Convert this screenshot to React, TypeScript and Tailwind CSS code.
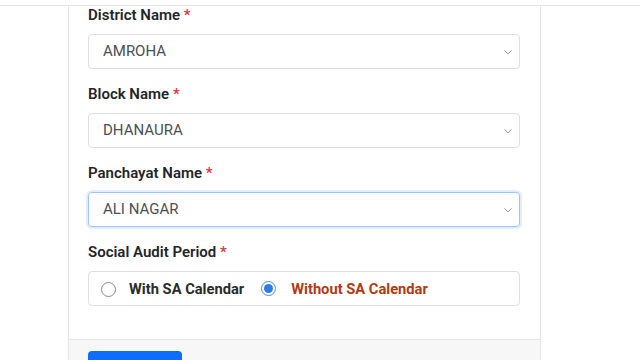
import React from "react";

const Chevron = () => (
  <svg width="10" height="10" viewBox="0 0 16 16" className="absolute right-[6px] top-1/2 -translate-y-1/2">
    <path d="M3 6l5 5 5-5" fill="none" stroke="#8a8a8a" strokeWidth="1.6" strokeLinecap="round" strokeLinejoin="round" />
  </svg>
);

function Field({ label, value, focused }: { label: string; value: string; focused?: boolean }) {
  return (
    <div className="mb-[14px]">
      <div className="text-[15px] leading-[22px] font-semibold text-[#212529] mb-2">
        {label} <span className="text-[#dc3545]">*</span>
      </div>
      <div
        className={
          focused
            ? "relative h-[35px] w-[432px] rounded-[4px] border border-[#9ec5fe] shadow-[0_0_0_2px_rgba(13,110,253,0.12)] bg-white flex items-center pl-[14px] text-[15px] text-[#4a4f55]"
            : "relative h-[35px] w-[432px] rounded-[4px] border border-[#dedede] bg-white flex items-center pl-[14px] text-[15px] text-[#4a4f55]"
        }
      >
        {value}
        <Chevron />
      </div>
    </div>
  );
}

export default function App() {
  return (
    <div className="relative w-[640px] h-[360px] overflow-hidden bg-white" style={{ fontFamily: "Roboto, 'Noto Sans', sans-serif" }}>
      <div className="absolute top-0 left-0 right-0 h-[6px] bg-white border-b border-[#e6e6e6] z-10" />
      <div className="ml-[68px] w-[473px] border-x border-[#e5e5e5] bg-white">
        <div className="pl-[19px] pt-[4px] pb-[33px]">
          <Field label="District Name" value="AMROHA" />
          <Field label="Block Name" value="DHANAURA" />
          <Field label="Panchayat Name" value="ALI NAGAR" focused />
          <div>
            <div className="text-[15px] leading-[22px] font-semibold text-[#212529] mb-2">
              Social Audit Period <span className="text-[#dc3545]">*</span>
            </div>
            <div className="h-[35px] w-[432px] rounded-[4px] border border-[#dedede] flex items-center pl-[12px]">
              <span className="mt-[2px] w-[15px] h-[15px] rounded-full border border-[#8a8a8a] bg-white" />
              <span className="ml-[13px] text-[14.7px] font-bold text-[#2b2b2b] mt-[2px]">With SA Calendar</span>
              <span className="ml-[17px] w-[15px] h-[15px] rounded-full border border-[#4a8cf0] flex items-center justify-center bg-white">
                <span className="w-[9px] h-[9px] rounded-full bg-[#2f7de1]" />
              </span>
              <span className="ml-[15px] text-[14.7px] font-bold text-[#b23a12] mt-[2px]">Without SA Calendar</span>
            </div>
          </div>
        </div>
        <div className="border-t border-[#e5e5e5] bg-[#f7f7f7] pl-[19px] pt-[11px] h-[40px]">
          <div className="w-[94px] h-[38px] rounded-[4px] bg-[#0d6efd]" />
        </div>
      </div>
    </div>
  );
}
